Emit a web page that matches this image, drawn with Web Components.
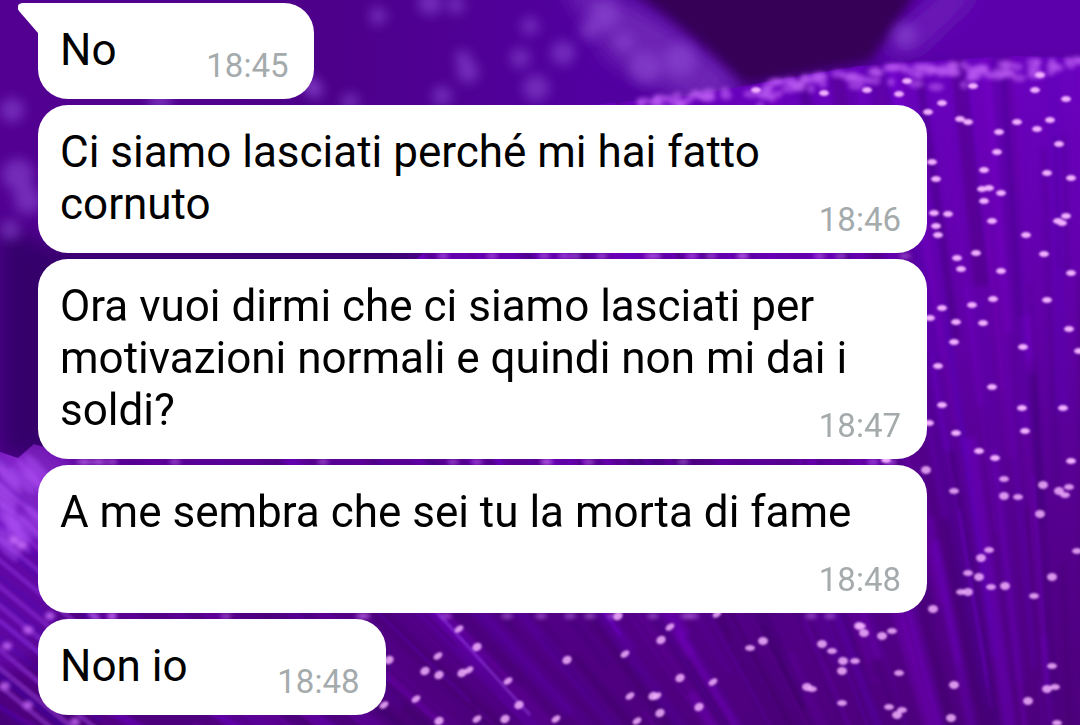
<!DOCTYPE html>
<html lang="it">
<head>
<meta charset="utf-8">
<meta name="viewport" content="width=device-width, initial-scale=1">
<title>Chat</title>
<style>
  body { margin: 0; background: #4b0082; font-family: Roboto, "Liberation Sans", sans-serif; }
</style>
</head>
<body>
<chat-screen>
  <message-bubble time="18:45" tail>No</message-bubble>
  <message-bubble time="18:46">Ci siamo lasciati perché mi hai fatto cornuto</message-bubble>
  <message-bubble time="18:47">Ora vuoi dirmi che ci siamo lasciati per motivazioni normali e quindi non mi dai i soldi?</message-bubble>
  <message-bubble time="18:48">A me sembra che sei tu la morta di fame</message-bubble>
  <message-bubble time="18:48">Non io</message-bubble>
</chat-screen>

<template id="wallpaper">
  <style>
    :host { display: block; overflow: hidden; }
    svg { display: block; width: 100%; height: 100%; }
  </style>
  <svg viewBox="0 0 1080 725" preserveAspectRatio="xMidYMid slice" aria-hidden="true">
    <defs>
      <filter id="soft" x="-30%" y="-30%" width="160%" height="160%"><feGaussianBlur stdDeviation="10"/></filter>
      <filter id="haze" x="-30%" y="-30%" width="160%" height="160%"><feGaussianBlur stdDeviation="6"/></filter>
      <filter id="blend" x="-5%" y="-5%" width="110%" height="110%"><feGaussianBlur stdDeviation="2"/></filter>
      <filter id="glow" x="-5%" y="-5%" width="110%" height="110%"><feGaussianBlur stdDeviation="1.1"/></filter>
      <linearGradient id="sky" x1="0" x2="1" y1="0" y2="0">
        <stop offset="0" stop-color="#530092"/><stop offset=".3" stop-color="#4d0089"/>
        <stop offset=".55" stop-color="#5200a0"/><stop offset="1" stop-color="#5500a0"/>
      </linearGradient>
      <linearGradient id="petal" x1="0" x2="0" y1="0" y2="1">
        <stop offset="0" stop-color="#6b03c4"/><stop offset=".35" stop-color="#6400ae"/>
        <stop offset=".7" stop-color="#560090"/><stop offset="1" stop-color="#4d007c"/>
      </linearGradient>
      <clipPath id="flower">
        <path d="M0 452L18 458L34 444L60 452L200 448L330 330L420 256L500 190L600 104L690 96L745 86L800 76L830 71L860 66L905 63L950 60L1010 56L1080 58V725H0Z"/>
      </clipPath>
    </defs>
    <rect width="1080" height="725" fill="url(#sky)"/>
    <g filter="url(#soft)">
      <path d="M0 225L60 250L420 250L300 480L0 455Z" fill="#35006a"/>
      <path d="M560 -20Q650 -5 745 86L700 110L610 60Z" fill="#7428b8" opacity=".85"/>
      <path d="M860 -20L1090 -20V60H865Z" fill="#5c02ac"/>
      <path d="M880 50L950 -10L980 -10L915 52Z" fill="#7625bd" opacity=".7"/>
    </g>
    <path d="M615 -20Q690 28 745 85L870 62L925 -20Z" fill="#350055" filter="url(#haze)"/>
    <g id="bokeh" filter="url(#haze)"></g>
    <g clip-path="url(#flower)">
      <rect width="1080" height="725" fill="url(#petal)"/>
      <g id="shades" filter="url(#blend)"></g>
      <g id="strands" filter="url(#glow)"></g>
      <ellipse cx="20" cy="490" rx="60" ry="50" fill="#a040ee" opacity=".55" filter="url(#soft)"/>
      <ellipse cx="0" cy="590" rx="60" ry="80" fill="#7a14d8" opacity=".35" filter="url(#soft)"/>
    </g>
    <g id="rim" filter="url(#blend)"></g>
    <g id="tips" fill="#f2b0ff" filter="url(#glow)"></g>
  </svg>
</template>

<template id="bubble">
  <style>
    :host { display: block; max-width: 100%; }
    .bubble {
      position: relative; display: grid; box-sizing: border-box; padding: 21px 22px 23px;
      background: #fff; color: #000; border-radius: 30px;
      font-size: 44px; line-height: 52px;
    }
    .tail { display: none; position: absolute; top: 0; left: -20px; width: 52px; height: 30px; fill: #fff; }
    :host([tail]) .tail { display: block; }
    :host([tail]) .bubble { border-top-left-radius: 0; }
    p, time { grid-area: 1 / 1; }
    p { margin: 0; }
    .reserve { display: inline-block; width: 176px; height: 1px; }
    time { align-self: end; justify-self: end; margin: 0 4px -10px 0; font-size: 33px; line-height: 40px; color: #a5abad; }
  </style>
  <div class="bubble">
    <svg class="tail" viewBox="0 0 52 30" aria-hidden="true"><path d="M52 0H5C0 0 -2 4 1 8L20 30H52Z"/></svg>
    <p><slot></slot><span class="reserve"></span></p>
    <time></time>
  </div>
</template>

<template id="screen">
  <style>
    :host { display: grid; min-height: 100vh; overflow: hidden; }
    chat-wallpaper, main { grid-area: 1 / 1; }
    chat-wallpaper { contain: size; }
    main {
      position: relative; display: flex; flex-direction: column; align-items: flex-start; gap: 6px;
      padding: 3px 153px 9px 38px;
    }
  </style>
  <chat-wallpaper></chat-wallpaper>
  <main><slot></slot></main>
</template>

<script>
  const stamp = (host, id) => {
    const root = host.attachShadow({ mode: "open" });
    root.append(document.getElementById(id).content.cloneNode(true));
    return root;
  };

  // Bright stamen tips, as x,y pairs.
  const TIPS = `756,90 824,93 867,90 899,94 907,81 942,103 928,112 973,86 960,119 968,122 999,132 997,152 1017,122
    1035,90 1040,75 1066,99 1050,120 1037,129 1059,144 1047,173 1071,178 984,170 932,162 936,179 989,188 982,189
    1001,193 984,201 934,213 948,214 936,226 938,235 992,221 1066,216 1058,221 1062,223 1026,235 976,253 957,258
    1044,254 1001,271 961,269 1071,273 942,308 972,305 993,299 1047,300 930,318 956,322 983,323 1069,329 954,342
    1023,347 1079,351 938,366 992,387 942,405 1022,408 1063,408 929,423 956,433 1025,431 979,451 995,458 1071,461
    926,470 1004,479 1043,485 1069,487 886,460 954,491 1004,496 1018,497 1059,491 1065,495 1040,514 989,550
    981,558 968,573 979,577 991,587 1005,586 961,592 968,592 1077,551 1052,577 1034,596 933,609 892,631 882,636
    861,626 864,633 899,673 954,685 1052,666 1047,689 1055,687 1028,701 889,707 897,715 902,710 951,718 1057,723
    389,660 384,705 425,671 438,656 439,675 416,699 439,721 459,629 477,647 469,670 462,673 508,681 519,705
    477,719 505,719 556,719 567,660 625,654 661,640 670,627 618,616 630,696 653,696 657,696 660,713 637,721
    680,678 713,682 699,707 750,648 763,641 717,614 822,644 832,651 807,687 812,689 843,661 855,661 842,671
    842,703 859,626`.trim().split(/\s+/).map(p => p.split(",").map(Number));

  // Out-of-focus specks: x, y, radius.
  const BOKEH = [[378,16,9],[430,3,12],[456,5,9],[530,26,9],[468,72,11],[463,58,8],[520,58,10],[563,53,12],[536,88,13],
    [624,42,9],[645,68,16],[315,90,9],[350,102,9],[442,96,10],[160,100,12],[12,110,12],[18,175,16],[28,200,14],[10,230,10],
    [310,85,9],[605,15,14],[590,30,10],[680,60,16],[905,35,12]];

  class ChatWallpaper extends HTMLElement {
    constructor() {
      super();
      const root = stamp(this, "wallpaper");
      const add = (id, markup) => { root.getElementById(id).innerHTML = markup; };
      let seed = 7;
      const rnd = () => (seed = (seed * 16807) % 2147483647) / 2147483647;

      add("bokeh", BOKEH.map(([x, y, r]) => `<circle cx="${x}" cy="${y}" r="${r}" fill="#8a48d0" opacity=".6"/>`).join(""));

      // Filaments fan out from a point below the lower right corner.
      const cx = 1090, cy = 1300, tones = ["#7a0ade", "#3c0062", "#7c08cc", "#470072", "#5a00b8", "#3a0070", "#7400b4"];
      const filaments = (count, thin, spread, faint) => {
        let lines = "";
        for (let i = 0; i < count; i++) {
          const a = Math.PI * (0.99 + rnd() * 0.53), from = 500 + rnd() * 550, to = from + 120 + rnd() * 350;
          const at = r => `${Math.round(cx + r * Math.cos(a))} ${Math.round(cy + r * Math.sin(a))}`;
          lines += `<path d="M${at(from)}L${at(to)}" stroke="${tones[i % 7]}" stroke-width="${thin + Math.floor(rnd() * spread)}" opacity="${(faint + rnd() * 0.25).toFixed(2)}"/>`;
        }
        return lines;
      };
      add("shades", filaments(260, 5, 10, 0.15));
      let lines = filaments(200, 2, 3, 0.1);
      for (let i = 0; i < 26; i++) {
        const y = 455 + i * 11, x = Math.round(rnd() * 30) - 30;
        lines += `<path d="M${x} ${y}l110 90" stroke="${i % 2 ? "#a850ee" : "#4200a0"}" stroke-width="5" opacity=".4"/>`;
      }
      lines += `<path d="M435 610L530 715" stroke="#8a3ad8" stroke-width="3" opacity=".6"/>`;
      add("strands", lines);

      let rim = "";
      for (let i = 0; i < 120; i++) {
        const x = Math.round(640 + rnd() * 440);
        const y = Math.round((x < 850 ? 101 - (x - 640) * 0.14 : 69 - (x - 850) * 0.04) + rnd() * rnd() * 26);
        rim += `<ellipse cx="${x}" cy="${y}" rx="${4 + Math.floor(rnd() * 5)}" ry="4" fill="#ba5cf2" opacity=".6"/>`;
      }
      // The near petal's frayed edge, in long slanted strokes.
      for (let i = 0; i < 16; i++) {
        const x = Math.round(rnd() * 45), y = Math.round(458 + rnd() * 90);
        rim += `<ellipse cx="${x}" cy="${y}" rx="18" ry="5" fill="#b054f4" opacity=".45" transform="rotate(48 ${x} ${y})"/>`;
      }
      for (const [x, y] of [[22,545],[50,616],[28,630],[7,646],[5,686],[28,705],[112,616],[75,722],[14,540]]) {
        rim += `<ellipse cx="${x}" cy="${y}" rx="5" ry="4" fill="#cc70fa" opacity=".8"/>`;
      }
      for (let i = 0; i < 45; i++) {
        const [x0, w, y] = [[430, 490, 256], [60, 840, 462], [50, 800, 616]][i % 3];
        rim += `<ellipse cx="${Math.round(x0 + rnd() * w)}" cy="${y}" rx="6" ry="3" fill="#cc78f8" opacity=".5"/>`;
      }
      add("rim", rim);
      add("tips", TIPS.map(([x, y], i) => y < 470
        ? `<ellipse cx="${x}" cy="${y}" rx="5" ry="3"/>`
        : `<ellipse cx="${x}" cy="${y}" rx="5" ry="${3 + i % 2}" opacity=".85" transform="rotate(${x < 720 ? -35 : 0} ${x} ${y})"/>`).join(""));
    }
  }

  class MessageBubble extends HTMLElement {
    constructor() {
      super();
      const time = stamp(this, "bubble").querySelector("time");
      time.textContent = this.getAttribute("time");
      time.dateTime = this.getAttribute("time");
    }
  }

  class ChatScreen extends HTMLElement {
    constructor() { super(); stamp(this, "screen"); }
  }

  customElements.define("chat-wallpaper", ChatWallpaper);
  customElements.define("message-bubble", MessageBubble);
  customElements.define("chat-screen", ChatScreen);
</script>
</body>
</html>
